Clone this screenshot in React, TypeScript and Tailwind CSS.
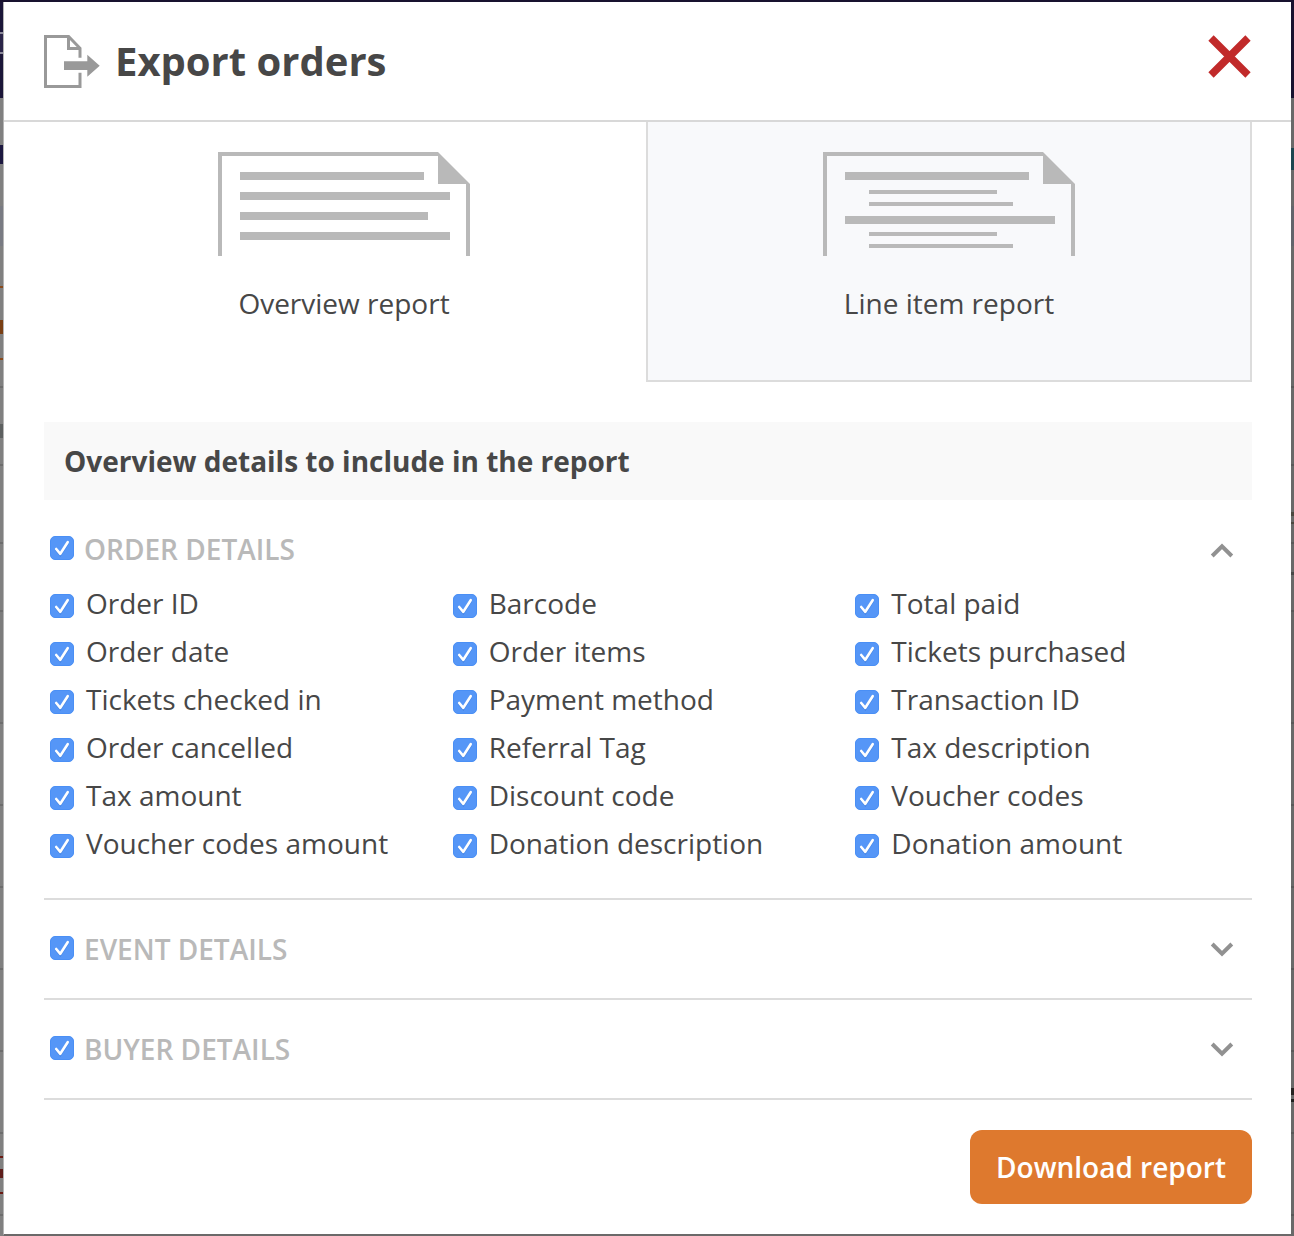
import { useState } from "react";

type Segment = { height: number; color: string };

const LEFT_EDGE: Segment[] = [
  { height: 30, color: "bg-[#1b1638]" },
  { height: 2, color: "bg-[#8b899b]" },
  { height: 18, color: "bg-[#2a2548]" },
  { height: 2, color: "bg-[#8b899b]" },
  { height: 44, color: "bg-[#1b1638]" },
  { height: 47, color: "bg-[#808080]" },
  { height: 19, color: "bg-[#1c1840]" },
  { height: 42, color: "bg-[#808080]" },
  { height: 40, color: "bg-[#797b83]" },
  { height: 40, color: "bg-[#808080]" },
  { height: 2, color: "bg-[#8a4a1c]" },
  { height: 32, color: "bg-[#808080]" },
  { height: 14, color: "bg-[#7a3f14]" },
  { height: 24, color: "bg-[#808080]" },
  { height: 2, color: "bg-[#8a4a1c]" },
  { height: 26, color: "bg-[#808080]" },
  { height: 2, color: "bg-[#6d6d6d]" },
  { height: 36, color: "bg-[#808080]" },
  { height: 14, color: "bg-[#5d6060]" },
  { height: 26, color: "bg-[#808080]" },
  { height: 2, color: "bg-[#6d6d6d]" },
  { height: 76, color: "bg-[#808080]" },
  { height: 2, color: "bg-[#6d6d6d]" },
  { height: 66, color: "bg-[#808080]" },
  { height: 2, color: "bg-[#6d6d6d]" },
  { height: 110, color: "bg-[#7c7c7c]" },
  { height: 2, color: "bg-[#6d6d6d]" },
  { height: 80, color: "bg-[#808080]" },
  { height: 2, color: "bg-[#6d6d6d]" },
  { height: 80, color: "bg-[#808080]" },
  { height: 2, color: "bg-[#6d6d6d]" },
  { height: 80, color: "bg-[#808080]" },
  { height: 2, color: "bg-[#6d6d6d]" },
  { height: 80, color: "bg-[#808080]" },
  { height: 2, color: "bg-[#6d6d6d]" },
  { height: 80, color: "bg-[#808080]" },
  { height: 2, color: "bg-[#6d6d6d]" },
  { height: 22, color: "bg-[#808080]" },
  { height: 2, color: "bg-[#6b1a12]" },
  { height: 11, color: "bg-[#808080]" },
  { height: 9, color: "bg-[#5e1d1b]" },
  { height: 14, color: "bg-[#808080]" },
  { height: 2, color: "bg-[#6b1a12]" },
  { height: 20, color: "bg-[#808080]" },
  { height: 2, color: "bg-[#6d6d6d]" },
];

const RIGHT_EDGE: Segment[] = [
  { height: 96, color: "bg-[#18122f]" },
  { height: 50, color: "bg-[#696969]" },
  { height: 22, color: "bg-[#1c4650]" },
  { height: 36, color: "bg-[#696969]" },
  { height: 40, color: "bg-[#62646b]" },
  { height: 140, color: "bg-[#696969]" },
  { height: 2, color: "bg-[#595959]" },
  { height: 76, color: "bg-[#696969]" },
  { height: 2, color: "bg-[#595959]" },
  { height: 46, color: "bg-[#696969]" },
  { height: 4, color: "bg-[#4c4840]" },
  { height: 6, color: "bg-[#696969]" },
  { height: 2, color: "bg-[#4c4840]" },
  { height: 18, color: "bg-[#696969]" },
  { height: 2, color: "bg-[#595959]" },
  { height: 28, color: "bg-[#696969]" },
  { height: 3, color: "bg-[#484848]" },
  { height: 35, color: "bg-[#696969]" },
  { height: 2, color: "bg-[#595959]" },
  { height: 110, color: "bg-[#666666]" },
  { height: 2, color: "bg-[#595959]" },
  { height: 80, color: "bg-[#696969]" },
  { height: 2, color: "bg-[#595959]" },
  { height: 80, color: "bg-[#696969]" },
  { height: 2, color: "bg-[#595959]" },
  { height: 80, color: "bg-[#696969]" },
  { height: 2, color: "bg-[#595959]" },
  { height: 80, color: "bg-[#696969]" },
  { height: 2, color: "bg-[#595959]" },
  { height: 36, color: "bg-[#696969]" },
  { height: 7, color: "bg-[#262322]" },
  { height: 4, color: "bg-[#696969]" },
  { height: 3, color: "bg-[#1f1f1f]" },
  { height: 30, color: "bg-[#696969]" },
  { height: 2, color: "bg-[#595959]" },
  { height: 80, color: "bg-[#696969]" },
  { height: 2, color: "bg-[#595959]" },
];

const ORDER_FIELDS = [
  "Order ID",
  "Barcode",
  "Total paid",
  "Order date",
  "Order items",
  "Tickets purchased",
  "Tickets checked in",
  "Payment method",
  "Transaction ID",
  "Order cancelled",
  "Referral Tag",
  "Tax description",
  "Tax amount",
  "Discount code",
  "Voucher codes",
  "Voucher codes amount",
  "Donation description",
  "Donation amount",
];

function PageEdge({ segments, rest }: { segments: Segment[]; rest: string }) {
  return (
    <div className={`flex w-[3px] shrink-0 flex-col ${rest}`}>
      {segments.map((segment, i) => (
        <div key={i} className={`shrink-0 ${segment.color}`} style={{ height: segment.height }} />
      ))}
    </div>
  );
}

function ExportIcon() {
  return (
    <svg width="56" height="54" viewBox="0 0 56 54" fill="none" aria-hidden="true">
      <path
        d="M36 23.7V14.3L24.6 2.5H1.5V52.5H36V38.7"
        stroke="#999"
        strokeWidth="3"
      />
      <path d="M24.5 2.5V14.6H36" stroke="#999" strokeWidth="3" />
      <path d="M20 27.3H43.3V20.7L55.7 31.7L43.3 42.7V36H20Z" fill="#999" />
    </svg>
  );
}

function ReportIcon({ detailed = false }: { detailed?: boolean }) {
  return (
    <svg width="252" height="104" viewBox="0 0 252 104" fill="#b9b9b9" aria-hidden="true">
      <path d="M0 0H220L252 32V104H248V32H220V4H4V104H0Z" />
      {detailed ? (
        <path d="M22 20H206V28H22ZM46 38H174V42H46ZM46 50H190V54H46ZM22 64H232V72H22ZM46 80H174V84H46ZM46 92H190V96H46Z" />
      ) : (
        <path d="M22 20H206V28H22ZM22 40H232V48H22ZM22 60H210V68H22ZM22 80H232V88H22Z" />
      )}
    </svg>
  );
}

function Checkbox({ id, className }: { id: string; className: string }) {
  return (
    <span className={`grid size-6 shrink-0 ${className}`}>
      <input
        id={id}
        type="checkbox"
        defaultChecked
        className="peer col-start-1 row-start-1 size-6 appearance-none rounded-[5px] border border-[#bdbdbd] bg-white checked:border-[#4a8ff5] checked:bg-[#5596f7]"
      />
      <svg
        viewBox="0 0 24 24"
        fill="none"
        aria-hidden="true"
        className="pointer-events-none invisible col-start-1 row-start-1 size-6 peer-checked:visible"
      >
        <path d="M6.2 14L10.3 18.8L17.7 7.2" stroke="#2f6fcc" strokeOpacity="0.45" strokeWidth="2.6" strokeLinecap="round" />
        <path d="M6.2 13L10.3 17.8L17.7 6.2" stroke="#fff" strokeWidth="2.6" strokeLinecap="round" strokeLinejoin="round" />
      </svg>
    </span>
  );
}

function Section({
  id,
  title,
  fields = [],
  initiallyOpen = false,
}: {
  id: string;
  title: string;
  fields?: string[];
  initiallyOpen?: boolean;
}) {
  const [open, setOpen] = useState(initiallyOpen);

  return (
    <section className="border-b-2 border-[#dcdcdc] pt-[30px] pb-7">
      <div className="flex h-10 items-center pr-[18px] pl-1.5">
        <Checkbox id={id} className="mb-1" />
        <label htmlFor={id} className="flex-1 pb-0.5 pl-2.5 text-[28px] leading-10 font-semibold text-[#b9b9b9]">
          {title}
        </label>
        <button type="button" aria-label={`Toggle ${title}`} aria-expanded={open} onClick={() => setOpen(!open)}>
          <svg width="24" height="16" viewBox="0 0 24 16" fill="none" className={open ? "" : "rotate-180"}>
            <path d="M2.2 14L12 4.4L21.8 14" stroke="#919191" strokeWidth="4" />
          </svg>
        </button>
      </div>
      {open && fields.length > 0 && (
        <ul className="mt-2.5 grid grid-cols-3 pb-0.5">
          {fields.map((field, i) => (
            <li key={field} className="flex h-12 items-center pl-1.5">
              <Checkbox id={`${id}-${i}`} className="mt-1" />
              <label htmlFor={`${id}-${i}`} className="pb-0.5 pl-3 text-[28px] leading-10 whitespace-nowrap">
                {field}
              </label>
            </li>
          ))}
        </ul>
      )}
    </section>
  );
}

export default function App() {
  const [report, setReport] = useState("overview");

  const cardClass = (name: string) =>
    `flex flex-col items-center border-r-2 border-b-2 pt-[30px] pb-[57px] text-[28px] leading-10 ${
      report === name
        ? "border-transparent bg-white"
        : "border-[#dcdcdc] border-l-2 bg-[#f8f9fb]"
    }`;

  return (
    <div className="flex min-h-screen flex-col bg-[#18122f] pt-0.5 font-['Open_Sans','Noto_Sans',sans-serif] text-[#474747]">
      <div className="flex flex-1">
        <PageEdge segments={LEFT_EDGE} rest="bg-[#808080]" />
        <div
          role="dialog"
          aria-labelledby="export-title"
          className="min-w-0 flex-1 border-b-2 border-l border-b-[#6b6969] border-l-[#b5b5b5] bg-white"
        >
          <header className="flex h-[120px] items-center border-b-2 border-[#d8d8d8] pr-10 pl-10">
            <ExportIcon />
            <h1 id="export-title" className="flex-1 pl-[15px] text-[40px] leading-[56px] font-bold">
              Export orders
            </h1>
            <button type="button" aria-label="Close" className="pb-2">
              <svg width="44" height="44" viewBox="0 0 44 44" fill="none">
                <path d="M4 3L41 40M41 3L4 40" stroke="#c12a2a" strokeWidth="7.5" />
              </svg>
            </button>
          </header>

          <main className="pr-[39px] pl-10">
            <div className="grid grid-cols-[602fr_606fr]">
              <button type="button" aria-pressed={report === "overview"} onClick={() => setReport("overview")} className={cardClass("overview")}>
                <ReportIcon />
                <span className="mt-[27px]">Overview report</span>
              </button>
              <button type="button" aria-pressed={report === "line-item"} onClick={() => setReport("line-item")} className={cardClass("line-item")}>
                <ReportIcon detailed />
                <span className="mt-[27px]">Line item report</span>
              </button>
            </div>

            <h2 className="mt-10 bg-[#f9f9f9] px-5 py-[19px] text-[28px] leading-10 font-bold">
              Overview details to include in the report
            </h2>

            <Section id="order" title="ORDER DETAILS" fields={ORDER_FIELDS} initiallyOpen />
            <Section id="event" title="EVENT DETAILS" />
            <Section id="buyer" title="BUYER DETAILS" />

            <div className="flex justify-end py-[30px]">
              <button
                type="button"
                className="rounded-xl bg-[#de792e] px-[26px] py-[17px] text-[28px] leading-10 font-semibold text-white"
              >
                Download report
              </button>
            </div>
          </main>
        </div>
        <PageEdge segments={RIGHT_EDGE} rest="bg-[#696969]" />
      </div>
    </div>
  );
}
